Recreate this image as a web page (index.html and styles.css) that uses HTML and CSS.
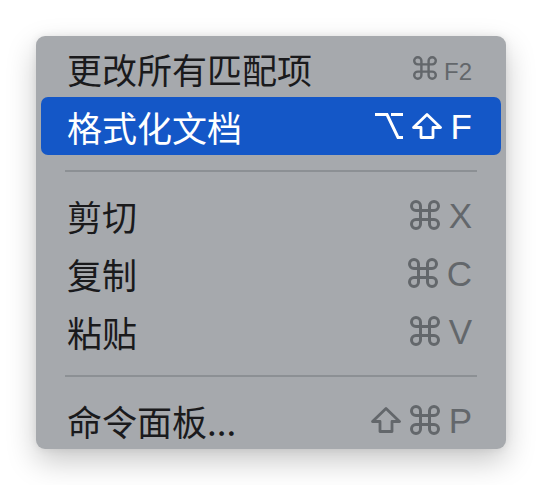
FILE: index.html
```html
<!DOCTYPE html>
<html lang="zh-CN">
<head>
    <meta charset="UTF-8">
    <meta name="viewport" content="width=device-width, initial-scale=1.0">
    <title>编辑器菜单</title>
    <link rel="stylesheet" href="styles.css">
</head>
<body>
    <div class="menu">
        <div class="menu-item">
            <span class="label">更改所有匹配项</span>
            <span class="keys">
                <svg class="key-cmd small" viewBox="2 2 20 20"><path d="M15 6v12a3 3 0 1 0 3-3H6a3 3 0 1 0 3 3V6a3 3 0 1 0-3 3h12a3 3 0 1 0-3-3"/></svg>
                <span class="key-small">F2</span>
            </span>
        </div>
        <div class="menu-item active">
            <span class="label">格式化文档</span>
            <span class="keys">
                <svg class="key-opt" viewBox="0 0 28 26"><path d="M0 1.5H12L23 24.5H28M16 1.5H28"/></svg>
                <svg class="key-shift" viewBox="0 0 30 26"><path d="M15 1.5L28.5 14.5H21V24.5H9V14.5H1.5Z"/></svg>
                <span class="key">F</span>
            </span>
        </div>

        <div class="separator"></div>

        <div class="menu-item">
            <span class="label">剪切</span>
            <span class="keys">
                <svg class="key-cmd" viewBox="2 2 20 20"><path d="M15 6v12a3 3 0 1 0 3-3H6a3 3 0 1 0 3 3V6a3 3 0 1 0-3 3h12a3 3 0 1 0-3-3"/></svg>
                <span class="key">X</span>
            </span>
        </div>
        <div class="menu-item">
            <span class="label">复制</span>
            <span class="keys">
                <svg class="key-cmd" viewBox="2 2 20 20"><path d="M15 6v12a3 3 0 1 0 3-3H6a3 3 0 1 0 3 3V6a3 3 0 1 0-3 3h12a3 3 0 1 0-3-3"/></svg>
                <span class="key">C</span>
            </span>
        </div>
        <div class="menu-item">
            <span class="label">粘贴</span>
            <span class="keys">
                <svg class="key-cmd" viewBox="2 2 20 20"><path d="M15 6v12a3 3 0 1 0 3-3H6a3 3 0 1 0 3 3V6a3 3 0 1 0-3 3h12a3 3 0 1 0-3-3"/></svg>
                <span class="key">V</span>
            </span>
        </div>

        <div class="separator"></div>

        <div class="menu-item">
            <span class="label">命令面板...</span>
            <span class="keys">
                <svg class="key-shift" viewBox="0 0 30 26"><path d="M15 1.5L28.5 14.5H21V24.5H9V14.5H1.5Z"/></svg>
                <svg class="key-cmd" viewBox="2 2 20 20"><path d="M15 6v12a3 3 0 1 0 3-3H6a3 3 0 1 0 3 3V6a3 3 0 1 0-3 3h12a3 3 0 1 0-3-3"/></svg>
                <span class="key">P</span>
            </span>
        </div>
    </div>
</body>
</html>
```

FILE: styles.css
```css
:root {
    --menu-bg: #a6a9ad;
    --text-dark: #1a1a1c;
    --text-muted: #63676b;
    --highlight: #1457c7;
    --divider: #8c9094;
}

body {
    margin: 0;
    padding: 36px;
    background-color: #ffffff;
    font-family: "Noto Sans CJK SC", "Noto Sans", sans-serif;
}

.menu {
    width: 460px;
    height: 410px;
    padding: 3px 5px 0;
    background-color: var(--menu-bg);
    border-radius: 9px;
    box-shadow: 0 12px 30px rgba(0,0,0,0.22), 0 0 8px rgba(0,0,0,0.08);
}

.menu-item {
    display: flex;
    justify-content: space-between;
    align-items: center;
    height: 58px;
    padding: 0 29px 0 26px;
    border-radius: 7px;
    color: var(--text-dark);
}

.label {
    font-size: 35px;
    line-height: 58px;
    position: relative;
    top: 1px;
}

.keys {
    display: flex;
    align-items: center;
    gap: 9px;
    color: var(--text-muted);
}

.keys svg {
    fill: none;
    stroke: currentColor;
    stroke-width: 2;
    stroke-linejoin: round;
}

.key {
    font-family: "Liberation Sans", Arial, sans-serif;
    font-size: 35px;
    line-height: 1;
}

.key-small {
    font-family: "Liberation Sans", Arial, sans-serif;
    font-size: 24px;
    line-height: 1;
    margin-top: 8px;
    margin-left: -2px;
}

.key-cmd {
    width: 30px;
    height: 30px;
}

.key-cmd.small {
    width: 24px;
    height: 24px;
}

.key-opt {
    width: 28px;
    height: 26px;
    stroke-width: 3 !important;
    stroke-linejoin: miter !important;
}

.key-shift {
    width: 30px;
    height: 26px;
    stroke-width: 2.8 !important;
}

.menu-item.active {
    background-color: var(--highlight);
    color: #ffffff;
}

.menu-item.active .keys {
    color: #ffffff;
}

.separator {
    height: 2px;
    margin: 15px 24px 14px;
    background-color: var(--divider);
}
```
